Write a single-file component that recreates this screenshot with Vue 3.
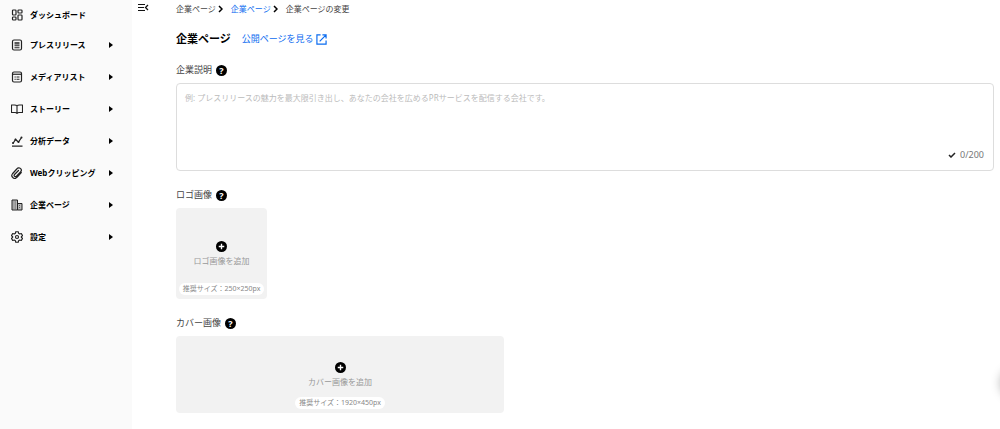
<script setup>
import { ref } from 'vue'

const description = ref('')
const menu = [
  { label: 'プレスリリース', icon: 'release' },
  { label: 'メディアリスト', icon: 'list' },
  { label: 'ストーリー', icon: 'book' },
  { label: '分析データ', icon: 'chart' },
  { label: 'Webクリッピング', icon: 'clip' },
  { label: '企業ページ', icon: 'building' },
  { label: '設定', icon: 'gear' }
]
</script>

<template>
  <div class="layout">
    <nav class="sidebar" aria-label="メインメニュー">
      <a class="item first" href="#">
        <svg class="icon" viewBox="0 0 24 24">
          <g fill="none" stroke="currentColor" stroke-width="2.400">
            <rect x="3" y="2" width="7" height="10" rx="1.500" />
            <rect x="14" y="2" width="8" height="6" rx="1.500" />
            <rect x="14" y="12" width="8" height="10" rx="1.500" />
            <rect x="3" y="16" width="7" height="6" rx="1.500" />
          </g>
        </svg>
        <span>ダッシュボード</span>
      </a>
      <button v-for="m in menu" :key="m.label" class="item" type="button">
        <svg class="icon" viewBox="0 0 24 24">
          <g v-if="m.icon === 'release'" fill="none" stroke="currentColor" stroke-width="2.400">
            <rect x="3" y="2" width="18" height="20" rx="3" />
            <path d="M7 7.500h10M7 10h10M7 13.500h10M7 17.500h10" />
          </g>
          <g v-else-if="m.icon === 'list'" fill="none" stroke="currentColor" stroke-width="2.400">
            <rect x="3" y="2" width="18" height="20" rx="3" />
            <path d="M3 6.500h18" />
            <path d="M7 12h2.500M11 12h6M7 16.500h2.500M11 16.500h6" stroke-width="2" />
          </g>
          <g v-else-if="m.icon === 'book'" fill="none" stroke="currentColor" stroke-width="2.200" stroke-linejoin="round">
            <path d="M12 6c-1-1.500-3-2-5-2H1v15h7c2 0 3 .5 4 2 1-1.500 2-2 4-2h7V4h-6c-2 0-4 .5-5 2zM12 6v15" />
          </g>
          <g v-else-if="m.icon === 'chart'" fill="none" stroke="currentColor" stroke-width="2.500">
            <path d="M4 17l5-8 6 5 6-9M2 22h21" />
            <g fill="currentColor" stroke="none">
              <circle cx="4" cy="16" r="2" /><circle cx="9" cy="9" r="2" />
              <circle cx="15" cy="14" r="2" /><circle cx="21" cy="5" r="2" />
            </g>
          </g>
          <g v-else-if="m.icon === 'clip'" fill="none" stroke="currentColor" stroke-width="2.400" stroke-linecap="round">
            <path d="M20.500 11l-8.500 9.500a5.500 5.500 0 0 1-9-7l9-10a4.500 4.500 0 0 1 7.500 6l-8.500 9a2.500 2.500 0 0 1-4-3.500L15 7" />
          </g>
          <g v-else-if="m.icon === 'building'" stroke="currentColor" stroke-width="2">
            <path d="M2 2h11v20H2zM13 9h9v13h-9z" fill="#bbb" />
            <path d="M5 6h5M5 10h5M5 14h5M5 18h5M16 13h3M16 17h3" fill="none" stroke="#666" stroke-dasharray="2 1" />
          </g>
          <g v-else fill="none" stroke="currentColor" stroke-width="2.400" stroke-linejoin="round">
            <path d="M9.500 1.500h5l.7 3.200 2.300 1.300 3.100-1 2.500 4.300-2.400 2.200v1l2.400 2.200-2.500 4.300-3.100-1-2.300 1.300-.7 3.200h-5l-.7-3.200L6.500 18l-3.100 1-2.500-4.300 2.400-2.200v-1L.9 9.300 3.400 5l3.100 1 2.300-1.300z" />
            <circle cx="12" cy="12" r="3" />
          </g>
        </svg>
        <span>{{ m.label }}</span>
        <svg class="arrow" viewBox="0 0 4 6"><path d="M0 0l4 3-4 3z" fill="currentColor" /></svg>
      </button>
    </nav>

    <div class="rail">
      <button class="toggle" type="button" aria-label="メニューを閉じる">
        <svg viewBox="0 0 11 9" fill="none" stroke="currentColor">
          <path d="M0 1.500h7M0 4.500h6M0 7.500h7" />
          <path d="M10 2L7.500 4.500 10 7" stroke-width="1.300" />
        </svg>
      </button>
    </div>

    <main class="content">
      <nav class="crumbs" aria-label="パンくずリスト">
        <a href="#">企業ページ</a>
        <svg class="chevron" viewBox="0 0 5 8"><path d="M1 1l3 3-3 3" /></svg>
        <a class="blue" href="#">企業ページ</a>
        <svg class="chevron" viewBox="0 0 5 8"><path d="M1 1l3 3-3 3" /></svg>
        <span>企業ページの変更</span>
      </nav>

      <header class="heading">
        <h1>企業ページ</h1>
        <a class="public blue" href="#">
          公開ページを見る
          <svg viewBox="0 0 12 12" fill="none" stroke="currentColor" stroke-width="1.300">
            <path d="M5 1H1v10h10V7M7 1h4v4M11 1L4 8" />
          </svg>
        </a>
      </header>

      <section class="field">
        <div class="label">
          <label for="description">企業説明</label>
          <button class="help" type="button" aria-label="企業説明のヘルプ">?</button>
        </div>
        <div class="editor">
          <textarea
            id="description"
            v-model="description"
            maxlength="200"
            placeholder="例: プレスリリースの魅力を最大限引き出し、あなたの会社を広めるPRサービスを配信する会社です。"
          ></textarea>
          <div class="count">
            <svg viewBox="0 0 8 6"><path d="M1 3l2 2 4-4" /></svg>
            <span>{{ description.length }}/200</span>
          </div>
        </div>
      </section>

      <section class="field">
        <div class="label">
          <span id="logo-label">ロゴ画像</span>
          <button class="help" type="button" aria-label="ロゴ画像のヘルプ">?</button>
        </div>
        <button class="upload logo" type="button" aria-describedby="logo-label">
          <svg class="plus" viewBox="0 0 12 12">
            <circle cx="6" cy="6" r="6" /><path d="M6 3v6M3 6h6" />
          </svg>
          <span class="add">ロゴ画像を追加</span>
          <span class="size">推奨サイズ：250×250px</span>
        </button>
      </section>

      <section class="field">
        <div class="label">
          <span id="cover-label">カバー画像</span>
          <button class="help" type="button" aria-label="カバー画像のヘルプ">?</button>
        </div>
        <button class="upload cover" type="button" aria-describedby="cover-label">
          <svg class="plus" viewBox="0 0 12 12">
            <circle cx="6" cy="6" r="6" /><path d="M6 3v6M3 6h6" />
          </svg>
          <span class="add">カバー画像を追加</span>
          <span class="size">推奨サイズ：1920×450px</span>
        </button>
      </section>
    </main>

    <button class="chat" type="button" aria-label="チャット"></button>
  </div>
</template>

<style>
body {
  overflow-x: hidden;
  background: #fff;
}
</style>

<style scoped>
.layout {
  display: flex;
  min-height: 100vh;
  color: #111;
  font-family: "Noto Sans", "Noto Sans CJK JP", sans-serif;
  font-size: 8px;
  line-height: 12px;
}
.layout * {
  box-sizing: border-box;
}
button {
  padding: 0;
  border: 0;
  background: none;
  color: inherit;
  font: inherit;
  cursor: pointer;
}
a {
  color: inherit;
  text-decoration: none;
}
svg {
  display: block;
  flex: none;
}
.sidebar {
  flex: none;
  display: flex;
  flex-direction: column;
  width: 132px;
  background: #fafafa;
}
.item {
  display: flex;
  align-items: center;
  gap: 7px;
  height: 32px;
  padding: 0 19px 0 11px;
  color: #000;
  font-weight: 700;
  text-align: left;
}
.first {
  height: 29px;
}
.icon {
  width: 12px;
  height: 12px;
  color: #222;
}
.arrow {
  width: 4px;
  height: 6px;
  margin-left: auto;
}
.rail {
  flex: none;
  width: 44px;
  padding: 3px 0 0 6px;
}
.toggle svg {
  width: 11px;
  height: 9px;
}
.content {
  flex: 1;
  min-width: 0;
  padding-right: 6px;
}
.crumbs {
  display: flex;
  align-items: center;
  height: 18px;
  color: #444;
}
.crumbs .blue,
.blue {
  color: #0b6cf0;
}
.chevron {
  width: 5px;
  height: 8px;
  margin: 0 8px 0 2px;
  fill: none;
  stroke: #000;
  stroke-width: 1.5;
}
.heading {
  display: flex;
  align-items: center;
  gap: 11px;
  height: 18px;
  margin: 12px 0 15px;
}
h1 {
  margin: 0;
  color: #000;
  font-size: 11px;
  line-height: 18px;
}
.public {
  display: flex;
  align-items: center;
  gap: 2px;
  font-size: 9px;
}
.public svg {
  width: 11px;
  height: 11px;
}
.field {
  margin-bottom: 17px;
}
.label {
  display: flex;
  align-items: center;
  gap: 4px;
  height: 14px;
  margin-bottom: 6px;
  color: #444;
  font-size: 9px;
}
.help {
  width: 11px;
  height: 11px;
  border-radius: 50%;
  background: #000;
  color: #fff;
  font-size: 9px;
  font-weight: 700;
  line-height: 11px;
}
.editor {
  display: flex;
  flex-direction: column;
  border: 1px solid #ddd;
  border-radius: 4px;
}
textarea {
  height: 64px;
  padding: 8px 8px 0;
  border: 0;
  outline: 0;
  background: none;
  color: #333;
  font: inherit;
  resize: none;
}
textarea::placeholder {
  color: #bbb;
}
.count {
  display: flex;
  align-items: center;
  justify-content: flex-end;
  gap: 4px;
  height: 22px;
  padding: 0 9px 8px;
  color: #777;
  font-size: 9px;
}
.count svg {
  width: 8px;
  height: 6px;
  fill: none;
  stroke: #222;
  stroke-width: 1.5;
}
.upload {
  display: flex;
  flex-direction: column;
  align-items: center;
  border-radius: 4px;
  background: #f2f2f2;
  color: #999;
}
.logo {
  width: 91px;
  height: 91px;
  padding: 33px 0 4px;
}
.cover {
  width: 328px;
  max-width: 100%;
  height: 77px;
  padding: 26px 0 4px;
}
.plus {
  width: 11px;
  height: 11px;
  margin-bottom: 3px;
}
.plus circle {
  fill: #000;
}
.plus path {
  stroke: #fff;
  stroke-width: 1.5;
}
.size {
  margin-top: auto;
  padding: 0 4px;
  border-radius: 6px;
  background: #fff;
  color: #888;
  font-size: 7px;
  white-space: nowrap;
}
.chat {
  position: fixed;
  right: -32px;
  bottom: 30px;
  width: 32px;
  height: 32px;
  border-radius: 50%;
  background: #fff;
  box-shadow: 0 0 10px rgba(0, 0, 0, 0.25);
}
</style>
